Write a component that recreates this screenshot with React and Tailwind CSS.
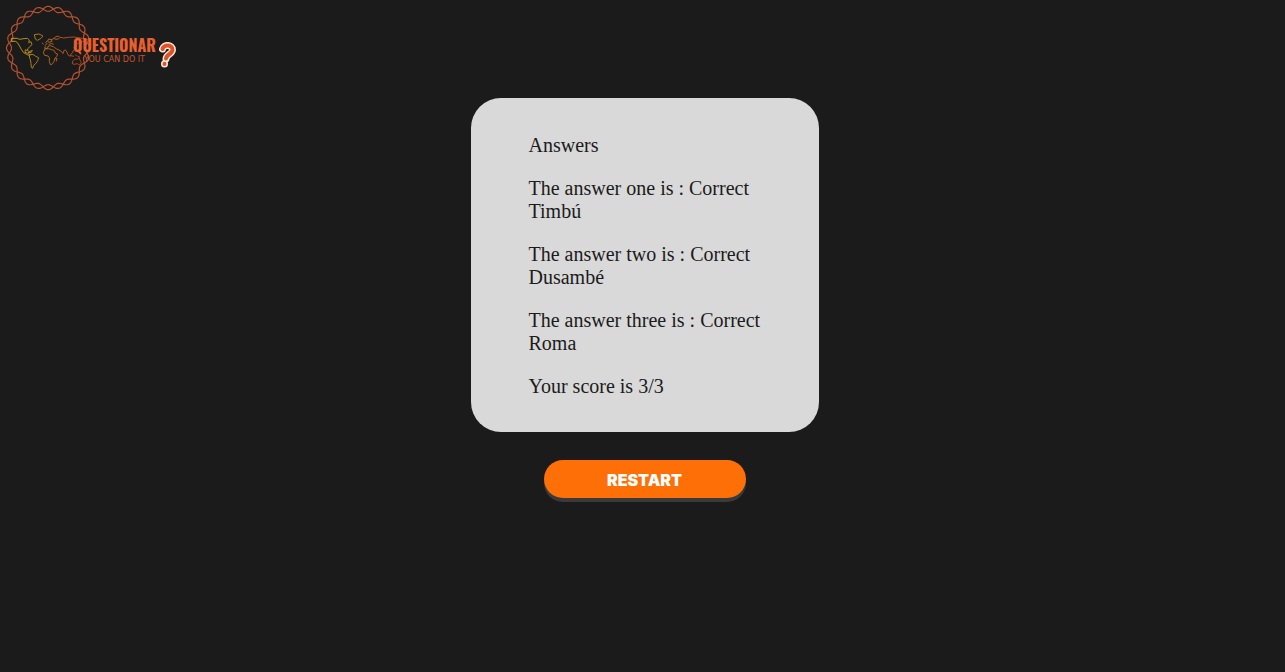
const answers = [
  { label: "one", result: "Correct", place: "Timbú" },
  { label: "two", result: "Correct", place: "Dusambé" },
  { label: "three", result: "Correct", place: "Roma" },
];

// One strand of the rope ring: a wave wrapped round a circle.
function strand(sign) {
  const points = [];
  for (let i = 0; i <= 360; i += 1) {
    const a = (i * Math.PI) / 180;
    const r = 39.2 + sign * 2.5 * Math.cos(12 * a);
    points.push(`${(48.2 + r * Math.sin(a)).toFixed(2)},${(48 - r * Math.cos(a)).toFixed(2)}`);
  }
  return points.join(" ");
}

function Logo() {
  return (
    <svg className="block" width="180" height="96" viewBox="0 0 180 96" role="img" aria-label="Questionar, you can do it">
      <defs>
        <linearGradient id="land" gradientUnits="userSpaceOnUse" x1="34" y1="0" x2="250" y2="0">
          <stop offset="0" stopColor="#c79a14" />
          <stop offset="0.35" stopColor="#a27a20" />
          <stop offset="0.6" stopColor="#a95e20" />
          <stop offset="1" stopColor="#a8401f" />
        </linearGradient>
      </defs>
      <g fill="none" stroke="#b45130" strokeWidth="1.2">
        <polyline points={strand(1)} />
        <polyline points={strand(-1)} />
      </g>
      <g transform="scale(0.33333)" fill="none" stroke="url(#land)" strokeWidth="3" strokeLinejoin="round">
        <path d="M34 115H52L58 118L72 116L82 115L88 120L86 128L93 125L96 134L89 140L84 146L82 152L76 149L75 157L84 160L90 164L88 167L78 162L70 157L64 148L59 139L54 130L47 124L34 124Z" />
        <path d="M81 148L86 153M84 157L97 151L93 158Z" />
        <path d="M90 164L99 163L107 169L116 173L113 182L108 190L101 196L98 205L94 202L93 190L91 179L88 171Z" />
        <path d="M103 104L117 102L129 108L123 115L112 121L106 117Z" />
        <path d="M130 133L127 128M136 139L134 145H143L144 139L151 137L160 140M135 137L141 131L137 127L142 123L147 127L156 124L155 119L146 117L143 123M146 134L155 130L161 133M151 119L160 117L166 111L174 108L180 112L191 114L205 112L219 111L236 113L251 116L263 119L257 124L247 124L242 131L238 126L232 132L227 137L222 143L224 148L219 153L218 158L212 163L211 169L205 166L201 157L197 150L192 151L189 161L184 154L177 150L170 147L164 143L160 140M161 115L168 118L178 116" />
        <path d="M135 147L145 146L155 149L162 151L167 160L173 162L170 170L165 174L162 185L156 193L151 194L148 184L148 173L144 168L134 166L130 158Z" />
        <path d="M166 177L171 175L169 184M218 183L225 177L232 178L237 173L241 182L244 188L239 195L232 191L223 193L217 191Z" />
        <path d="M213 167L222 169M226 164L231 169M233 168L240 172" />
      </g>
      <text x="73" y="52" fill="#e9602f" className="font-['Oswald','Roboto_Condensed','Open_Sans_Condensed','Liberation_Sans_Narrow',sans-serif] text-[16px] font-bold">QUESTIONAR</text>
      <text x="84" y="62" fill="#c25530" className="font-['DejaVu_Sans',sans-serif] text-[8px]">YOU CAN DO IT</text>
      <g fill="none" strokeLinecap="round" strokeLinejoin="round">
        <path d="M162.500 49C163.500 44 173 44.500 172.500 50C172 54.500 166.500 54 166 59M164.500 63.800V64" stroke="#fbe9d8" strokeWidth="7" />
        <path d="M162.500 49C163.500 44 173 44.500 172.500 50C172 54.500 166.500 54 166 58.500M164.500 63.800V64" stroke="#e1522a" strokeWidth="4" />
      </g>
    </svg>
  );
}

export default function App() {
  return (
    <div className="min-h-screen bg-[#1b1b1b]">
      <header className="h-[98px]">
        <a href="#home" className="inline-block">
          <Logo />
        </a>
      </header>
      <main className="flex flex-col items-center pl-1">
        <section className="w-full max-w-[348px] rounded-[30px] bg-[#d9d9d9] pr-[56px] pl-[58px] pt-9 pb-[34px] font-['Liberation_Serif',serif] text-[20px] leading-[23px] text-[#1b1b1b]">
          <h1>Answers</h1>
          {answers.map((a) => (
            <p key={a.label} className="mt-5">
              The answer {a.label} is : {a.result}
              <br />
              {a.place}
            </p>
          ))}
          <p className="mt-5">Your score is 3/3</p>
        </section>
        <button
          type="button"
          className="mt-7 h-[38px] w-[202px] cursor-pointer rounded-full bg-[#ff6f08] pt-0.5 font-['Inter',sans-serif] text-[16px] font-black text-white shadow-[0_4px_0_#3a3a3a]"
        >
          RESTART
        </button>
      </main>
    </div>
  );
}
